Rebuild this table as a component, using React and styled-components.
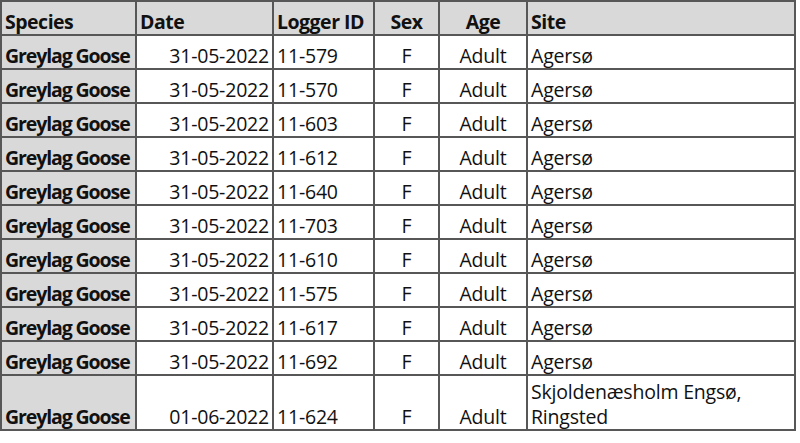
import { createGlobalStyle, styled } from 'styled-components';

const GlobalStyle = createGlobalStyle`
  html, body {
    margin: 0;
    padding: 0;
    background: #ffffff;
  }
  body {
    font-family: "Open Sans", "Noto Sans", sans-serif;
    color: #111111;
  }
`;

const columns = [
  { key: 'species', label: 'Species', width: 135, align: 'left' },
  { key: 'date', label: 'Date', width: 137, align: 'right' },
  { key: 'logger', label: 'Logger ID', width: 101, align: 'left' },
  { key: 'sex', label: 'Sex', width: 65, align: 'center' },
  { key: 'age', label: 'Age', width: 88, align: 'center' },
  { key: 'site', label: 'Site', width: 268, align: 'left' },
];

const rows = [
  ['31-05-2022', '11-579', 'Agersø'],
  ['31-05-2022', '11-570', 'Agersø'],
  ['31-05-2022', '11-603', 'Agersø'],
  ['31-05-2022', '11-612', 'Agersø'],
  ['31-05-2022', '11-640', 'Agersø'],
  ['31-05-2022', '11-703', 'Agersø'],
  ['31-05-2022', '11-610', 'Agersø'],
  ['31-05-2022', '11-575', 'Agersø'],
  ['31-05-2022', '11-617', 'Agersø'],
  ['31-05-2022', '11-692', 'Agersø'],
  ['01-06-2022', '11-624', 'Skjoldenæsholm Engsø, Ringsted', true],
];

const App = () => {
  return (
    <>
      <GlobalStyle />
      <Sheet>
        <colgroup>
          {columns.map((col) => (
            <col key={col.key} style={{ width: col.width }} />
          ))}
        </colgroup>
        <thead>
          <HeaderRow>
            {columns.map((col) => (
              <HeadCell key={col.key} $align={col.align === 'right' ? 'left' : col.align}>
                {col.label}
              </HeadCell>
            ))}
          </HeaderRow>
        </thead>
        <tbody>
          {rows.map(([date, logger, site, tall], i) => (
            <Row key={i} $tall={tall}>
              <SpeciesCell>Greylag Goose</SpeciesCell>
              <Cell $align="right">{date}</Cell>
              <Cell $align="left">{logger}</Cell>
              <Cell $align="center">F</Cell>
              <Cell $align="center">Adult</Cell>
              <SiteCell $wrap={tall}>{site}</SiteCell>
            </Row>
          ))}
        </tbody>
      </Sheet>
    </>
  );
};

const Sheet = styled.table`
  border-collapse: collapse;
  table-layout: fixed;
  width: 796px;
  font-size: 19.5px;
  line-height: 25px;
`;

const HeaderRow = styled.tr`
  height: 34px;
  background: #d9d9d9;
`;

const Row = styled.tr`
  height: ${(p) => (p.$tall ? '55px' : '34px')};
`;

const Cell = styled.td`
  border: 2px solid #575757;
  padding: 0 3px 0;
  vertical-align: bottom;
  text-align: ${(p) => p.$align};
  white-space: nowrap;
  overflow: hidden;
  letter-spacing: -0.2px;
`;

const HeadCell = styled.th`
  border: 2px solid #575757;
  padding: 0 3px 0;
  vertical-align: bottom;
  text-align: ${(p) => p.$align};
  font-weight: 700;
  white-space: nowrap;
  letter-spacing: -0.5px;
`;

const SpeciesCell = styled(Cell)`
  background: #d9d9d9;
  font-weight: 700;
  letter-spacing: -1.1px;
  padding-left: 3px;
`;

const SiteCell = styled(Cell)`
  white-space: ${(p) => (p.$wrap ? 'normal' : 'nowrap')};
  padding-right: 20px;
`;

export default App;
